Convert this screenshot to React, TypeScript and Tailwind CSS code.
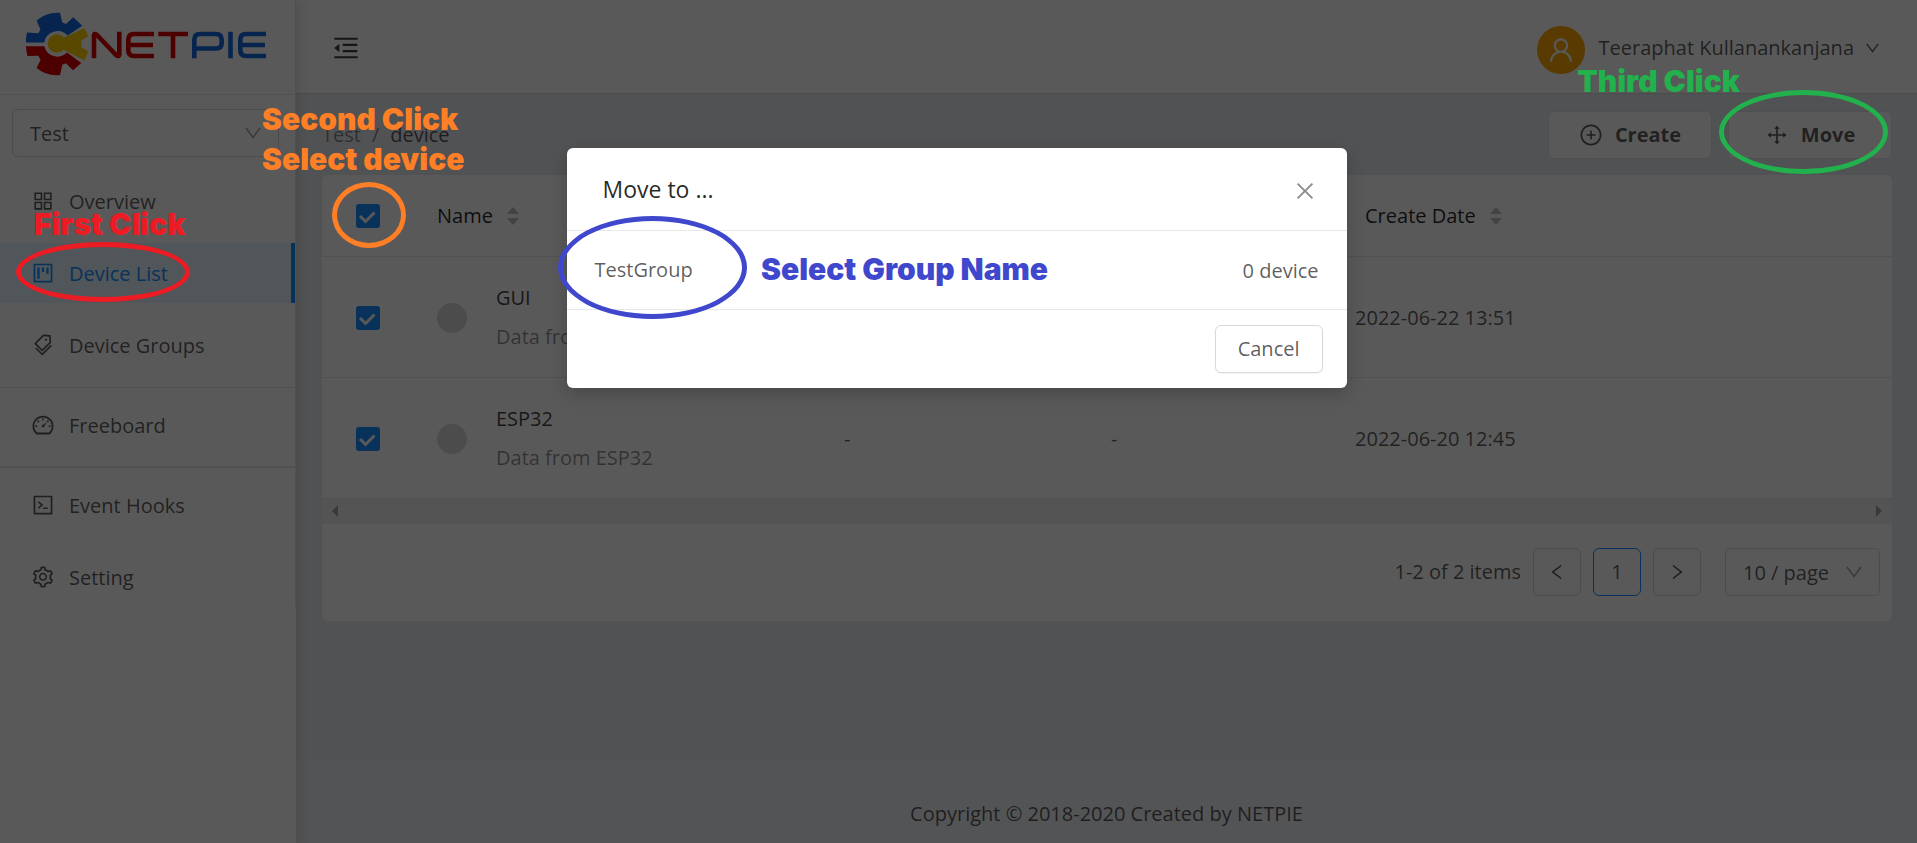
import {
  AiOutlineAppstore, AiOutlineProject, AiOutlineTags, AiOutlineDashboard, AiOutlineCode, AiOutlineSetting,
  AiOutlineMenuFold, AiOutlineUser, AiOutlinePlusCircle, AiOutlineDrag, AiOutlineClose,
  AiOutlineLeft, AiOutlineRight,
} from 'react-icons/ai';
import type { ReactNode } from 'react';

function Logo() {
  return (
    <svg viewBox="0 0 244 66" className="h-[66px] w-[244px]" role="img" aria-label="NETPIE">
      <path d="M1 30.500A31 31 0 0 1 2 20.500L13.300 21.300L15.500 17.500L11.600 8.600A31 31 0 0 1 35 .8L37.300 10.600L41 12L48.300 5.300L57.300 13.800L42.600 23.600A13.500 13.500 0 0 0 19.300 30.500Z" fill="#1268e0" />
      <path d="M1 34.300A31 31 0 0 0 2.500 44L13.300 43.800L15.600 47.800L11.600 56A31 31 0 0 0 35 63L37.300 52.800L41 51.300L48 58.300L56.300 51L42 40.600A13.500 13.500 0 0 1 19.300 34.300Z" fill="#dd0000" />
      <circle cx="32" cy="31.500" r="9.300" fill="#ffd000" />
      <path d="M38 26L59.500 16.300L63.300 24.500L56.500 28V35L63.300 39.600L59.600 48.600L38 37.500Z" fill="#ffd000" />
      <g fill="none" strokeWidth="4.600" strokeLinejoin="round">
        <path d="M69 46.300V24Q69 20.500 72 23L91 43Q94.300 45.500 94.300 42V19.700" stroke="#dd0000" />
        <path d="M129 22H109Q103.300 22 103.300 28V38Q103.300 44 109 44H129M103.300 33H128M133.300 22H163M148 22V46.300" stroke="#dd0000" />
        <path d="M169.300 46.300V28Q169.300 22 175 22H191Q196.700 22 196.700 28V31Q196.700 36.500 191 36.500H170M205.500 19.700V46.300M241 22H221Q215.300 22 215.300 28V38Q215.300 44 221 44H241M215.300 33H240" stroke="#1268e0" />
      </g>
    </svg>
  );
}

function ChevronDown({ className }: { className: string }) {
  return (
    <svg viewBox="0 0 16 12" className={className} fill="none" stroke="currentColor" strokeWidth="1.600" aria-hidden="true">
      <path d="M1 1L8 10.500L15 1" />
    </svg>
  );
}

function MenuItem({ icon, label, active }: { icon: ReactNode; label: string; active?: boolean }) {
  return (
    <a
      href="#"
      aria-current={active ? 'page' : undefined}
      className={
        active
          ? 'flex h-[60px] items-center gap-[14px] border-r-4 border-[#1890ff] bg-[#e6f7ff] pl-[31px] text-[#1890ff]'
          : 'flex h-[60px] items-center gap-[14px] pl-[31px] text-black/65'
      }
    >
      <span className="text-2xl">{icon}</span>
      <span className="pt-0.5">{label}</span>
    </a>
  );
}

function Sorter() {
  return (
    <svg viewBox="0 0 12 18" className="h-[18px] w-3" fill="#bfbfbf" aria-hidden="true">
      <path d="M0 7L6 0L12 7ZM0 11H12L6 18Z" />
    </svg>
  );
}

function Tick({ id, label }: { id: string; label: string }) {
  return (
    <span className="grid size-6 grid-cols-1">
      <input
        id={id}
        type="checkbox"
        defaultChecked
        aria-label={label}
        className="col-start-1 row-start-1 size-6 appearance-none rounded-[3px] bg-[#1890ff]"
      />
      <svg viewBox="0 0 24 24" className="pointer-events-none col-start-1 row-start-1 size-6" fill="none" stroke="#fff" strokeWidth="3" aria-hidden="true">
        <path d="M4 12L9.500 17.500L18.500 8.500" />
      </svg>
    </span>
  );
}

const devices = [
  { name: 'GUI', detail: 'Data from GUI', date: '2022-06-22 13:51' },
  { name: 'ESP32', detail: 'Data from ESP32', date: '2022-06-20 12:45' },
];

function DeviceTable() {
  return (
    <table className="w-full table-fixed text-left">
      <colgroup>
        <col className="w-[92px]" />
        <col className="w-[75px]" />
        <col className="w-[300px]" />
        <col className="w-[266px]" />
        <col className="w-[286px]" />
        <col />
      </colgroup>
      <thead>
        <tr className="h-[81px] border-b border-[#e8e8e8] text-black/85">
          <th className="pt-0.5 pl-[34px]"><Tick id="all" label="Select all devices" /></th>
          <th colSpan={2} className="pt-0.5 pl-[23px] font-medium">
            <span className="flex items-center gap-[14px]">Name <Sorter /></span>
          </th>
          <th />
          <th />
          <th className="pt-0.5 pl-[24px] font-medium">
            <span className="flex items-center gap-[14px]">Create Date <Sorter /></span>
          </th>
        </tr>
      </thead>
      <tbody>
        {devices.map((d) => (
          <tr key={d.name} className="h-[121px] border-b border-[#e8e8e8] text-black/65">
            <td className="pt-0.5 pl-[34px]"><Tick id={d.name} label={`Select ${d.name}`} /></td>
            <td className="pt-0.5 pl-[23px]"><div className="size-[30px] rounded-full bg-[#d9d9d9]" /></td>
            <td className="pt-0.5 pl-[7px]">
              <div className="pb-[7px] font-medium text-black/75">{d.name}</div>
              <div className="text-black/45">{d.detail}</div>
            </td>
            <td className="pt-0.5 pl-[55px]">-</td>
            <td className="pt-0.5 pl-[56px]">-</td>
            <td className="pt-0.5 pl-[14px]">{d.date}</td>
          </tr>
        ))}
      </tbody>
    </table>
  );
}

function Sidebar() {
  return (
    <aside className="z-10 flex w-[296px] shrink-0 flex-col bg-white shadow-[3px_0_12px_rgba(0,21,41,0.12)]">
      <div className="h-[95px] border-r border-b border-[#e8e8e8] pt-3 pl-[25px]"><Logo /></div>
      <div className="border-r border-[#e8e8e8]">
        <div className="mt-[14px] mr-4 mb-[14px] ml-3 grid">
          <select aria-label="Project" className="col-start-1 row-start-1 h-12 appearance-none rounded-md border border-[#d9d9d9] pt-0.5 pl-[17px] text-black/65">
            <option>Test</option>
          </select>
          <ChevronDown className="pointer-events-none col-start-1 row-start-1 mr-[18px] h-3 w-4 self-center justify-self-end text-black/35" />
        </div>
        <nav>
          <div className="flex flex-col gap-3 pb-3">
            <MenuItem icon={<AiOutlineAppstore />} label="Overview" />
            <MenuItem icon={<AiOutlineProject />} label="Device List" active />
            <MenuItem icon={<AiOutlineTags />} label="Device Groups" />
          </div>
          <div className="border-t border-[#e8e8e8] pt-[7px] pb-[11px]"><MenuItem icon={<AiOutlineDashboard />} label="Freeboard" /></div>
          <div className="flex flex-col gap-3 border-t-2 border-[#e8e8e8] pt-[7px]">
            <MenuItem icon={<AiOutlineCode />} label="Event Hooks" />
            <MenuItem icon={<AiOutlineSetting />} label="Setting" />
          </div>
        </nav>
      </div>
    </aside>
  );
}

function MoveDialog() {
  return (
    <div role="dialog" aria-labelledby="move-title" className="w-[780px] rounded-md bg-white shadow-[0_6px_18px_rgba(0,0,0,0.2)]">
      <div className="flex h-[83px] items-center justify-between border-b border-[#e8e8e8] pr-[30px] pl-9">
        <h2 id="move-title" className="text-[23px] font-medium text-black/85">Move to ...</h2>
        <button type="button" aria-label="Close" className="pt-1 text-2xl text-black/45"><AiOutlineClose /></button>
      </div>
      <div className="flex h-[79px] items-center justify-between border-b border-[#e8e8e8] pr-7 pl-7 text-black/65">
        <span>TestGroup</span>
        <span className="pt-0.5">0 device</span>
      </div>
      <div className="flex h-[78px] items-center justify-end pr-6">
        <button type="button" className="h-12 rounded-md border border-[#d9d9d9] px-[22px] text-black/65 shadow-xs">Cancel</button>
      </div>
    </div>
  );
}

function Annotations() {
  return (
    <div className="pointer-events-none absolute inset-0 font-['Inter','Liberation_Sans',sans-serif] text-[30px] leading-10 font-black whitespace-nowrap">
      <div className="absolute top-[242px] left-4 h-[60px] w-[174px] rounded-[50%] border-5 border-[#ed1c24]" />
      <div className="absolute top-[182px] left-[332px] h-[66px] w-[74px] rounded-[50%] border-5 border-[#ff7f27]" />
      <div className="absolute top-[216px] left-[558px] h-[103px] w-[189px] rounded-[50%] border-5 border-[#3f48cc]" />
      <div className="absolute top-[90px] right-[29px] h-[84px] w-[169px] rounded-[50%] border-5 border-[#22b14c]" />
      <span className="absolute top-[204px] left-[34px] text-[#ed1c24]">First Click</span>
      <span className="absolute top-[99px] left-[262px] text-[#ff7f27]">Second Click<br />Select device</span>
      <span className="absolute top-[249px] left-[761px] text-[#3f48cc]">Select Group Name</span>
      <span className="absolute top-[61px] right-[177px] text-[#22b14c]">Third Click</span>
    </div>
  );
}

export default function App() {
  return (
    <div className="relative font-['Open_Sans','Noto_Sans',sans-serif] text-[20px] leading-8 font-normal">
      <div className="flex min-h-screen bg-[#e8ebee]">
        <Sidebar />
        <div className="flex min-w-0 flex-1 flex-col">
          <header className="flex h-[94px] shrink-0 items-center justify-between border-b border-[#d4d6d8] bg-white pt-[3px] pr-[38px] pl-[35px]">
            <button type="button" aria-label="Collapse menu" className="text-[30px] text-black/75"><AiOutlineMenuFold /></button>
            <button type="button" className="flex items-center gap-[14px] text-black/65">
              <span className="mt-1 flex size-12 items-center justify-center rounded-full bg-[#ffa500] text-[30px] text-white"><AiOutlineUser /></span>
              <span className="flex items-center gap-3">
                Teeraphat Kullanankanjana
                <ChevronDown className="h-[10px] w-[13px]" />
              </span>
            </button>
          </header>
          <main className="flex-1 pt-[17px] pr-[25px] pl-[26px]">
            <div className="mb-4 flex items-center justify-between">
              <nav className="flex gap-[11px] text-black/65"><a href="#" className="text-black/45">Test</a><span className="text-black/45">/</span><span>device</span></nav>
              <div className="flex gap-4">
                <button type="button" className="flex h-12 w-[164px] items-center justify-center gap-3 rounded-md border border-[#e0e2e6] bg-white font-bold text-black/65"><AiOutlinePlusCircle className="text-2xl" />Create</button>
                <button type="button" className="flex h-12 w-[164px] items-center justify-center gap-3 rounded-md border border-[#e0e2e6] bg-white font-bold text-black/65"><AiOutlineDrag className="text-2xl" />Move</button>
              </div>
            </div>
            <section className="rounded-md bg-white">
              <DeviceTable />
              <div className="flex h-[25px] items-center justify-between bg-[#f0f0f0] px-[10px]">
                <svg viewBox="0 0 6 12" className="h-3 w-[6px]" fill="#a3a3a3" aria-hidden="true"><path d="M6 0V12L0 6Z" /></svg>
                <svg viewBox="0 0 6 12" className="h-3 w-[6px]" fill="#a3a3a3" aria-hidden="true"><path d="M0 0V12L6 6Z" /></svg>
              </div>
              <div className="flex h-[97px] items-center justify-end gap-3 pr-3 text-black/65">
                <span>1-2 of 2 items</span>
                <button type="button" aria-label="Previous page" className="flex size-12 items-center justify-center rounded-md border border-[#d9d9d9] text-xl"><AiOutlineLeft /></button>
                <button type="button" className="size-12 rounded-md border border-[#1890ff]">1</button>
                <button type="button" aria-label="Next page" className="flex size-12 items-center justify-center rounded-md border border-[#d9d9d9] text-xl"><AiOutlineRight /></button>
                <div className="ml-3 grid w-[155px]">
                  <select aria-label="Page size" className="col-start-1 row-start-1 h-12 appearance-none rounded-md border border-[#d9d9d9] pt-0.5 pl-[17px]"><option>10 / page</option></select>
                  <ChevronDown className="pointer-events-none col-start-1 row-start-1 mr-[18px] h-3 w-4 self-center justify-self-end text-black/35" />
                </div>
              </div>
            </section>
          </main>
          <footer className="flex h-[82px] items-center justify-center bg-[#eeeff2] pt-6 text-black/65">Copyright © 2018-2020 Created by NETPIE</footer>
        </div>
      </div>
      <div className="absolute inset-0 z-20 flex items-start justify-center bg-black/65 pt-[148px] pr-1"><MoveDialog /></div>
      <div className="absolute inset-0 z-30"><Annotations /></div>
    </div>
  );
}
